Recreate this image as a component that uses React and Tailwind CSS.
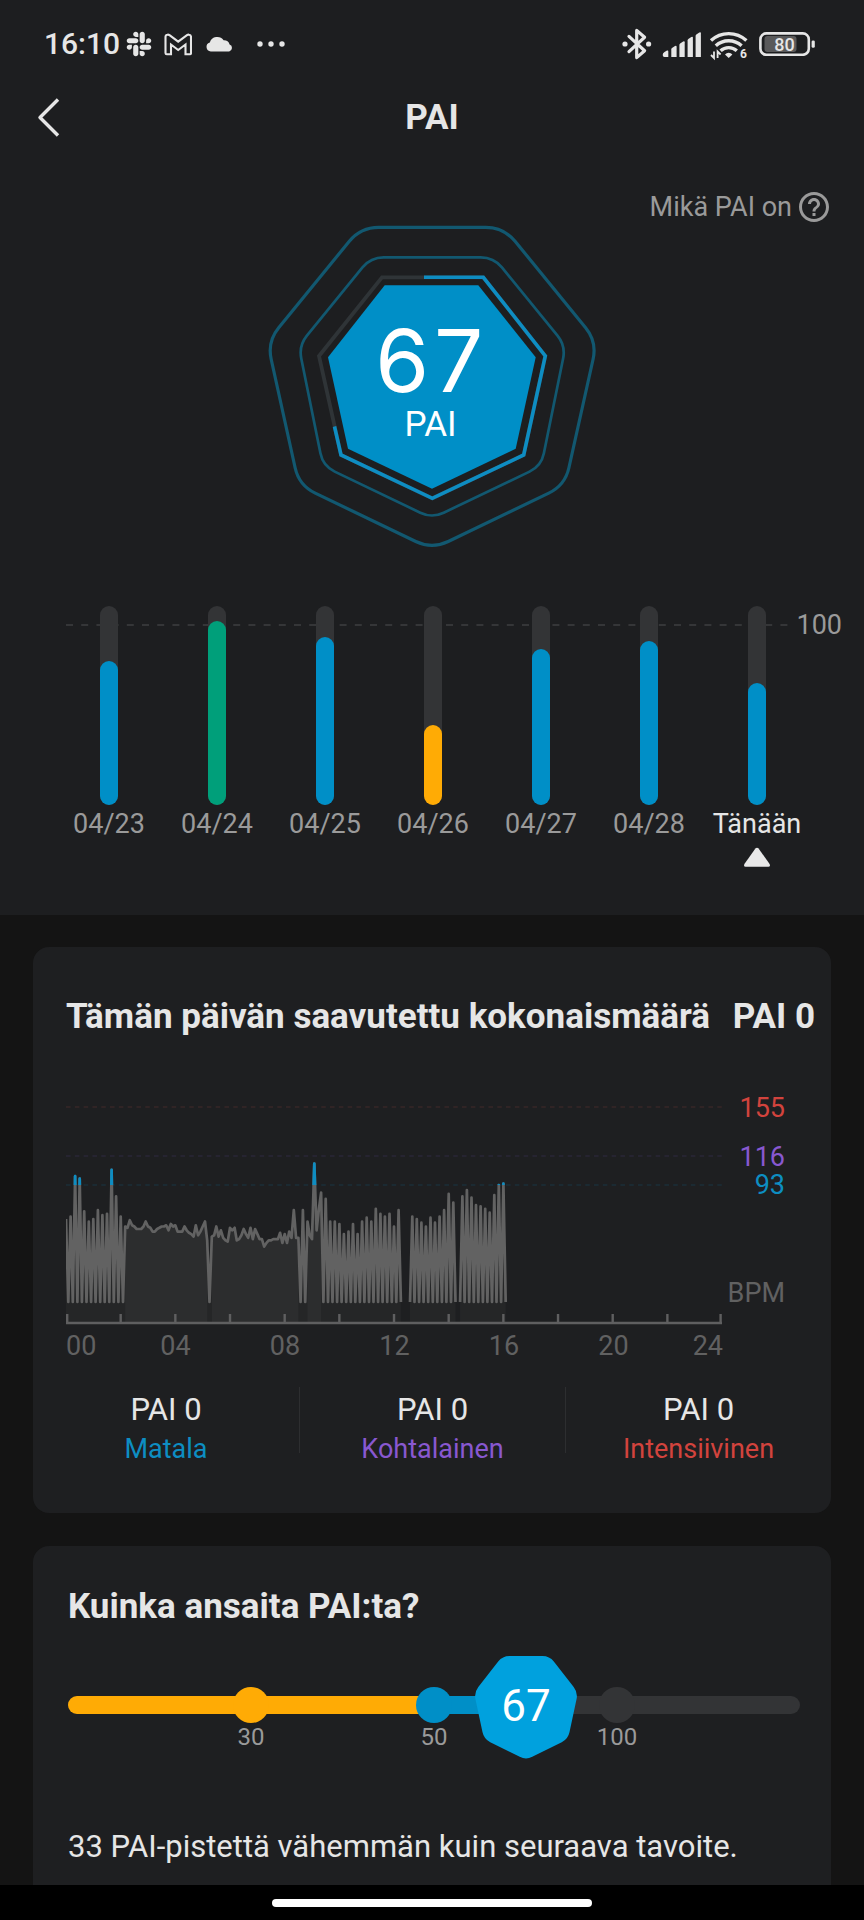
import { FaSlack } from "react-icons/fa"
import { MdHelpOutline } from "react-icons/md"

const days = [
  { label: "04/23", height: 144, color: "bg-[#008fc7]" },
  { label: "04/24", height: 184, color: "bg-[#009f7a]" },
  { label: "04/25", height: 168, color: "bg-[#008fc7]" },
  { label: "04/26", height: 80, color: "bg-[#ffab05]" },
  { label: "04/27", height: 156, color: "bg-[#008fc7]" },
  { label: "04/28", height: 164, color: "bg-[#008fc7]" },
  { label: "Tänään", height: 122, color: "bg-[#008fc7]", isToday: true },
]

const TRACK_HEIGHT = 199

const zones = [
  { label: "Matala", value: 0, color: "text-[#0d8ec2]" },
  { label: "Kohtalainen", value: 0, color: "text-[#8858d0]" },
  { label: "Intensiivinen", value: 0, color: "text-[#d2433d]" },
]

const spaced = (values) => values.flatMap((v) => [v, 0])

const heartRate = [
  {
    start: 0,
    values: [
      ...spaced([66, 68, 100, 98, 72, 64, 66, 73, 69, 70, 105, 84, 68]),
      60, 59, 65, 61, 60, 58, 58, 58, 60, 64, 60, 59, 56, 56, 58, 59, 60, 60, 61, 57, 62, 60, 61,
      56, 56, 56, 60, 57, 55, 54, 52, 61, 53, 56, 60, 64, 49, 0, 52, 53, 60, 52, 57, 51, 49, 48,
      59, 57, 59, 49, 50, 53, 58, 54, 51, 59, 50, 58, 54, 50, 50, 44, 47, 49, 49, 50, 50, 50, 55,
      47, 54, 47, 56, 51, 73, 51, 51, 0, 73, 0, 64, 53, 50, 110, 57, 74, 87, 0,
      ...spaced([82, 64, 64, 62, 54, 56, 62, 54, 64, 67, 64, 74, 70, 68, 70, 60, 73]),
    ],
  },
  { start: 151, values: [0, ...spaced([68, 66, 63, 60, 67, 63, 68, 73, 86, 79])] },
  { start: 173, values: [0, ...spaced([84, 89, 83, 77, 76, 74, 71, 85, 93, 94])] },
]

const AXIS_Y = 230
const sampleX = (i) => i * 2.278
const bpmY = (bpm) => 209 - bpm * 1.258

const linePath = heartRate
  .map(({ start, values }) => "M" + values.map((v, i) => `${sampleX(start + i).toFixed(1)} ${bpmY(v).toFixed(1)}`).join("L"))
  .join("")

const areaPath = heartRate
  .map(({ start, values }) => {
    const end = start + values.length - 1
    const top = values.map((v, i) => `${sampleX(start + i)} ${bpmY(v)}`).join("L")
    return `M${sampleX(start)} ${AXIS_Y}L${top}L${sampleX(end)} ${AXIS_Y}Z`
  })
  .join("")

// Stronger fill where two samples in a row have a reading
const densePath = heartRate
  .flatMap(({ start, values }) =>
    values.map((v, i) => {
      const next = values[i + 1]
      if (!v || !next) return ""
      const x1 = sampleX(start + i)
      const x2 = sampleX(start + i + 1)
      return `M${x1} ${AXIS_Y}L${x1} ${bpmY(v)}L${x2} ${bpmY(next)}L${x2} ${AXIS_Y}Z`
    })
  )
  .join("")

function roundedPolygon(points, cut) {
  const towards = ([ax, ay], [bx, by]) => {
    const length = Math.hypot(bx - ax, by - ay)
    return `${(ax + ((bx - ax) * cut) / length).toFixed(2)} ${(ay + ((by - ay) * cut) / length).toFixed(2)}`
  }
  const corners = points.map((p, i) => {
    const prev = points[(i + points.length - 1) % points.length]
    const next = points[(i + 1) % points.length]
    return `${towards(p, prev)}Q${p[0]} ${p[1]} ${towards(p, next)}`
  })
  return "M" + corners.join("L") + "Z"
}

const outerRing = roundedPolygon([[110.7, 17.3], [253.7, 17.3], [347, 131.7], [315, 275.3], [182, 339.3], [49, 275.3], [17.3, 131.7]], 18)
const middleRing = roundedPolygon([[120.7, 47.3], [243.7, 47.3], [315.7, 135.7], [291.3, 256], [182, 308.3], [73, 256], [48.7, 135.7]], 13)
const badgeShape = roundedPolygon([[27.5, 0], [74.5, 0], [103, 36.5], [93, 83], [51, 104], [9, 83], [-1, 36.5]], 7)

function StatusBar() {
  return (
    <div className="flex h-[88px] items-center justify-between pl-11 pr-12">
      <div className="flex items-center">
        <span className="text-[30px] font-medium leading-9">16:10</span>
        <FaSlack className="ml-1.5 h-7 w-[26px]" />
        <svg className="ml-3 h-[23px] w-7" viewBox="0 0 28 23" fill="none" stroke="currentColor" strokeWidth="2.1">
          <path d="M1.5 20V4Q1.5 1.8 3.4 1.7Q4.5 1.5 5.5 2.2L14.2 8.7L23 2.2Q24 1.5 25 1.7Q27 1.8 27 4V20Q27 21.3 25.8 21.3H21.5V11.5L14.2 17L7 11.5V21.3H2.8Q1.5 21.3 1.5 20Z" />
        </svg>
        <svg className="ml-3.5 h-4 w-[27px]" viewBox="0 0 27 16" fill="currentColor">
          <path d="M4.8 15.4A4.6 4.6 0 0 1 3.8 6.4A7.8 7.8 0 0 1 17.6 4.3A6 6 0 0 1 23.6 8.5A3.6 3.6 0 0 1 23.2 15.4Z" />
        </svg>
        <svg className="ml-6 h-1.5 w-7" viewBox="0 0 28 6" fill="currentColor">
          <circle cx="3" cy="3" r="2.7" />
          <circle cx="14" cy="3" r="2.7" />
          <circle cx="25" cy="3" r="2.7" />
        </svg>
      </div>

      <div className="flex items-center">
        <svg className="h-8 w-[30px]" viewBox="0 0 30 32" fill="none" stroke="currentColor" strokeWidth="3.2" strokeLinejoin="round" strokeLinecap="round">
          <path d="M7 8.4L22.6 22.7L14.7 29.6V2.4L22.6 9.3L7 23.6" />
          <circle cx="3" cy="16" r="2.6" fill="currentColor" stroke="none" />
          <circle cx="26.6" cy="16" r="2.6" fill="currentColor" stroke="none" />
        </svg>
        <svg className="ml-2.5 h-[25px] w-[39px]" viewBox="0 0 39 25" fill="currentColor">
          <path d="M.7 23Q.7 21 2.5 20L5 18.6Q6.3 18 6.3 19.5V25H2.5Q.7 25 .7 23Z" />
          <path d="M9.3 17.4Q9.3 16.5 10 16L13 14.1Q14.6 13.2 14.6 14.8V25H9.3Z" />
          <path d="M17.4 13Q17.4 12 18.1 11.5L21.1 9.6Q22.7 8.7 22.7 10.3V25H17.4Z" />
          <path d="M25.6 8.5Q25.6 7.5 26.3 7L29.3 5.1Q30.9 4.2 30.9 5.8V25H25.6Z" />
          <path d="M33.6 4Q33.6 3 34.3 2.5L37.3 .6Q38.9 -.3 38.9 1.3V25H33.6Z" />
        </svg>
        <svg className="ml-2 h-[36px] w-10" viewBox="0 -4 40 36" fill="none" stroke="currentColor" strokeWidth="3.4">
          <path d="M2 10.6A26 26 0 0 1 37.4 10.6" />
          <path d="M6.8 15.8A19 19 0 0 1 32.6 15.8" />
          <path d="M11.6 20.8A12 12 0 0 1 27.8 20.8" />
          <path d="M16 24.4A5 5 0 0 1 23.4 24.4L19.7 28Z" fill="currentColor" stroke="none" />
          <path d="M5 21.5V28L2 25M8.6 28V21.5L11.6 24.5" strokeWidth="1.8" />
          <text x="31" y="28.4" fontSize="12" fontWeight="700" fill="currentColor" stroke="none">6</text>
        </svg>
        <svg className="ml-2.5 h-6 w-[57px]" viewBox="0 0 57 24">
          <rect x="1.4" y="1.4" width="48.4" height="21.4" rx="6" fill="none" stroke="currentColor" strokeWidth="2.6" />
          <rect x="5.5" y="4" width="32" height="16" rx="3" fill="#59595a" />
          <rect x="52.6" y="8.4" width="3.2" height="7.4" rx="1.4" fill="currentColor" />
          <text x="25.4" y="18.6" textAnchor="middle" fontSize="18" fontWeight="500" fill="currentColor">80</text>
        </svg>
      </div>
    </div>
  )
}

function Score() {
  return (
    <div className="relative mx-auto w-[360px]">
      <svg className="block w-full" viewBox="2 14 360 334" fill="none">
        <path d={outerRing} stroke="#125870" strokeWidth="3.2" />
        <path d={middleRing} stroke="#125870" strokeWidth="2.7" />
        <path d="M132 67.3H233.3L295.3 146L273.7 245L182.3 288.3L91 245L69 146Z" stroke="#2f3437" strokeWidth="3.8" />
        <path d="M174 67.3H233.3L295.3 146L273.7 245L182.3 288.3L91 245L84.5 216.5" stroke="#0e8dc2" strokeWidth="3.6" />
        <path d="M134.7 75.3H228.3L285.7 147.3L265.7 238.7L182 278.7L98 238.7L78 147.3Z" fill="#008fc7" />
      </svg>
      <div className="absolute inset-0 flex flex-col items-center pr-[3px] pt-[101px] text-white">
        <span className="font-[Inter,sans-serif] text-[87px] leading-[72px] tabular-nums">67</span>
        <span className="mt-2 text-[35px] leading-10">PAI</span>
      </div>
    </div>
  )
}

function WeekChart() {
  return (
    <div className="relative mt-12 pl-[55px] pr-[53px]">
      {/* Goal line at 100 PAI */}
      <div className="absolute left-[66px] right-[22px] top-[3px] flex items-center justify-between">
        <svg className="h-0.5 flex-1" aria-hidden="true">
          <line x1="0" y1="1" x2="100%" y2="1" stroke="#353638" strokeWidth="2" strokeDasharray="7 8.2" />
        </svg>
        <span className="ml-2 text-[27px] leading-8 text-[#9a9a9a]">100</span>
      </div>

      <div className="relative flex">
        {days.map((day) => (
          <button key={day.label} type="button" className="flex flex-1 basis-0 flex-col items-center">
            <span className="flex w-[18px] items-end rounded-full bg-[#333436]" style={{ height: TRACK_HEIGHT }}>
              <span className={`w-full rounded-full ${day.color}`} style={{ height: day.height }} />
            </span>
            <span className={`mt-[3px] text-[27px] leading-8 ${day.isToday ? "text-[#e6e6e6]" : "text-[#9a9a9a]"}`}>
              {day.label}
            </span>
            {day.isToday && (
              <svg className="mt-[7px] h-5 w-7" viewBox="0 0 28 20" fill="#e8e8e8">
                <path d="M12.4 1.6Q14 0 15.6 1.6L26.6 17Q27.6 19.6 25.4 19.8H2.6Q.4 19.6 1.4 17Z" />
              </svg>
            )}
          </button>
        ))}
      </div>
    </div>
  )
}

function HeartRateChart() {
  return (
    <div className="mt-[55px] pl-[33px] pr-[46px]">
      <div className="flex">
        <div className="min-w-0 flex-1">
          <svg className="block w-full" viewBox="0 0 657 232" fill="none">
            <clipPath id="above-low-zone">
              <rect x="0" y="0" width="657" height="92" />
            </clipPath>
            <path d="M0 14H656" stroke="#302425" strokeWidth="2" strokeDasharray="4.6 4.2" />
            <path d="M0 63H656" stroke="#262431" strokeWidth="2" strokeDasharray="4.6 4.2" />
            <path d="M0 92H656" stroke="#1b2a32" strokeWidth="2" strokeDasharray="4.6 4.2" />
            <path d={areaPath} fill="#fff" fillOpacity=".03" />
            <path d={densePath} fill="#fff" fillOpacity=".035" />
            <path d={linePath} stroke="#626262" strokeWidth="2.7" strokeLinejoin="round" />
            <path d={linePath} stroke="#0e8dc2" strokeWidth="2.7" strokeLinejoin="round" clipPath="url(#above-low-zone)" />
            <path d="M0 230H656" stroke="#5f5f60" strokeWidth="2.4" />
            {Array.from({ length: 13 }, (_, i) => (
              <path key={i} d={`M${Math.min(Math.max(i * 54.67, 1.2), 654.6)} 221V230`} stroke="#5f5f60" strokeWidth="2.4" />
            ))}
          </svg>
          <div className="mt-[5px] flex text-center text-[27px] leading-8 text-[#616161]">
            <span className="flex-1 basis-0 text-left">00</span>
            {["04", "08", "12", "16", "20"].map((hour) => (
              <span key={hour} className="flex-2 basis-0">{hour}</span>
            ))}
            <span className="flex-1 basis-0 text-right">24</span>
          </div>
        </div>
        <div className="flex w-[62px] flex-col pt-px text-right text-[27px] leading-7">
          <span className="text-[#d2433d]">155</span>
          <span className="mt-[21px] text-[#8858d0]">116</span>
          <span className="text-[#0d8ec2]">93</span>
          <span className="mt-20 text-[#616161]">BPM</span>
        </div>
      </div>
    </div>
  )
}

function ZoneTotals() {
  return (
    <div className="mt-[25px] flex items-start text-center">
      {zones.map((zone, i) => (
        <div key={zone.label} className="flex flex-1 basis-0 items-start">
          {i > 0 && <span className="h-[66px] w-px bg-[#2d2e30]" />}
          <div className="flex-1">
            <p className="text-[31px] leading-[46px]">PAI {zone.value}</p>
            <p className={`text-[27px] leading-8 ${zone.color}`}>{zone.label}</p>
          </div>
        </div>
      ))}
    </div>
  )
}

function PaiScale() {
  return (
    <div className="mt-[59px]">
      <div className="relative flex h-9 items-center">
        <div className="flex h-[18px] w-full overflow-hidden rounded-full bg-[#333436]">
          <div className="w-1/2 bg-[#ffab05]" />
          <div className="w-1/8 bg-[#008fc7]" />
        </div>
        <div className="absolute inset-0 grid grid-cols-3 justify-items-center px-[12.5%]">
          <span className="size-9 rounded-full bg-[#ffab05]" />
          <span className="size-9 rounded-full bg-[#008fc7]" />
          <span className="size-9 rounded-full bg-[#333436]" />
        </div>
        <svg className="absolute left-[62.5%] top-1/2 h-[108px] w-26 -translate-x-1/2 -translate-y-1/2" viewBox="-1 -5 104 108">
          <path d={badgeShape} fill="#00a1de" />
          <text x="51" y="65" textAnchor="middle" fontSize="44" fill="#fff">67</text>
        </svg>
      </div>
      <div className="grid grid-cols-3 px-[12.5%] text-center text-2xl leading-7 text-[#9a9a9a]">
        <span>30</span>
        <span>50</span>
        <span>100</span>
      </div>
    </div>
  )
}

export default function App() {
  return (
    <div className="flex min-h-screen flex-col bg-[#141414] font-[Roboto,sans-serif] text-[#e6e6e6]">
      <section className="bg-[#1d1e20] pb-12">
        <StatusBar />

        <header className="grid h-[60px] grid-cols-[1fr_auto_1fr] items-center px-9">
          <button type="button" aria-label="Takaisin" className="w-6">
            <svg className="block h-10 w-6" viewBox="0 0 24 40" fill="none" stroke="currentColor" strokeWidth="3.4">
              <path d="M22 1.5L4 19.5L22 37.5" strokeLinejoin="round" />
            </svg>
          </button>
          <h1 className="text-[35px] font-bold leading-[42px]">PAI</h1>
        </header>

        <div className="mt-[41px] flex justify-end pr-8">
          <button type="button" className="flex h-[35px] items-center gap-1 text-[27px] leading-8 text-[#9a9a9a]">
            Mikä PAI on
            <MdHelpOutline className="size-9" />
          </button>
        </div>

        <Score />
        <WeekChart />
      </section>

      <main className="flex flex-1 flex-col gap-[33px] px-[33px] pt-8">
        <section className="rounded-2xl bg-[#1e1f21] pb-12 pt-[49px]">
          <h2 className="flex justify-between whitespace-nowrap pl-[33px] pr-4 text-[35px] font-bold leading-[42px]">
            <span>Tämän päivän saavutettu kokonaismäärä</span>
            <span>PAI 0</span>
          </h2>
          <HeartRateChart />
          <ZoneTotals />
        </section>

        <section className="flex-1 rounded-t-2xl bg-[#1e1f21] pb-4 pl-[35px] pr-[31px] pt-10">
          <h2 className="text-[35px] font-bold leading-[42px]">Kuinka ansaita PAI:ta?</h2>
          <PaiScale />
          <p className="mt-[75px] text-[31px] leading-[42px]">33 PAI-pistettä vähemmän kuin seuraava tavoite.</p>
        </section>
      </main>

      <footer className="flex h-[35px] items-center justify-center bg-black">
        <span className="h-2 w-80 rounded-full bg-white" />
      </footer>
    </div>
  )
}
